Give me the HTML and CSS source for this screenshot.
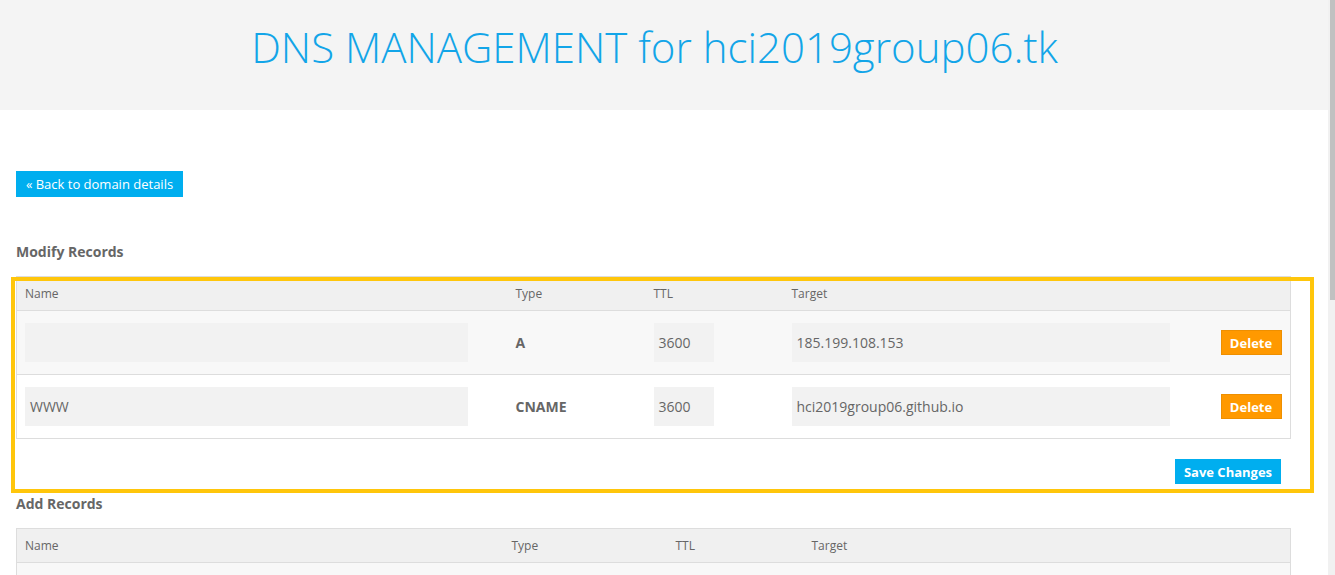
FILE: index.html
```html
<!DOCTYPE html>
<html lang="en">
<head>
<meta charset="utf-8">
<title>DNS Management</title>
<link rel="stylesheet" href="styles.css">
</head>
<body>
<header class="page-header">
  <h1 class="page-title">DNS MANAGEMENT for hci2019group06.tk</h1>
</header>
<main class="content">
  <a class="btn btn-blue btn-back" href="#">« Back to domain details</a>

  <h3 class="section-title">Modify Records</h3>
  <div class="highlight-zone">
    <table class="records">
      <colgroup>
        <col class="c-name"><col class="c-type"><col class="c-ttl"><col class="c-target"><col class="c-action">
      </colgroup>
      <thead>
        <tr><th>Name</th><th>Type</th><th>TTL</th><th>Target</th><th></th></tr>
      </thead>
      <tbody>
        <tr class="alt">
          <td><div class="field field-name"></div></td>
          <td class="type">A</td>
          <td><div class="field field-ttl">3600</div></td>
          <td><div class="field field-target">185.199.108.153</div></td>
          <td><a class="btn btn-orange" href="#">Delete</a></td>
        </tr>
        <tr>
          <td><div class="field field-name">WWW</div></td>
          <td class="type">CNAME</td>
          <td><div class="field field-ttl">3600</div></td>
          <td><div class="field field-target">hci2019group06.github.io</div></td>
          <td><a class="btn btn-orange" href="#">Delete</a></td>
        </tr>
      </tbody>
    </table>
    <div class="actions">
      <a class="btn btn-blue btn-save" href="#">Save Changes</a>
    </div>
    <div class="highlight"></div>
  </div>

  <h3 class="section-title section-add">Add Records</h3>
  <table class="records records-add">
    <colgroup>
      <col class="a-name"><col class="a-type"><col class="a-ttl"><col class="a-target"><col class="a-action">
    </colgroup>
    <thead>
      <tr><th>Name</th><th>Type</th><th>TTL</th><th>Target</th><th></th></tr>
    </thead>
    <tbody>
      <tr class="alt">
        <td><div class="field field-name"></div></td>
        <td></td>
        <td><div class="field field-ttl"></div></td>
        <td><div class="field field-target"></div></td>
        <td></td>
      </tr>
    </tbody>
  </table>
</main>
<div class="scrollbar"><div class="scrollbar-thumb"></div></div>
</body>
</html>
```

FILE: styles.css
```css
html, body {
  margin: 0;
  padding: 0;
  overflow: hidden;
  height: 100%;
}
body {
  font-family: "Open Sans", "Liberation Sans", sans-serif;
  color: #666;
  background: #fff;
  width: 1328px;
}
.page-header {
  background: #f4f4f4;
  height: 110px;
  box-sizing: border-box;
  padding: 18px 19px 0 0;
  text-align: center;
}
.page-title {
  margin: 0;
  font-size: 42px;
  font-weight: 300;
  line-height: 58px;
  color: #12a5e8;
}
.content {
  padding: 61px 0 0 16px;
  width: 1274px;
}
.btn {
  display: inline-flex;
  align-items: center;
  justify-content: center;
  height: 25px;
  box-sizing: border-box;
  text-decoration: none;
  color: #fff;
  font-size: 13px;
}
.btn-blue {
  background: #00aeef;
}
.btn-back {
  height: 26px;
  width: 167px;
  font-weight: 400;
}
.btn-orange {
  background: #ff9900;
  border: 1px solid #ee8f00;
  width: 61px;
  font-weight: 700;
}
.btn-save {
  width: 106px;
  font-weight: 700;
}
.section-title {
  margin: 45px 0 14px;
  font-size: 14px;
  line-height: 20px;
  font-weight: 700;
  color: #666;
}
.section-add {
  margin-top: 10px;
  margin-bottom: 14px;
}
.highlight-zone {
  position: relative;
}
.highlight {
  position: absolute;
  left: -5px;
  top: 1px;
  right: -24px;
  bottom: -9px;
  border: 4px solid #ffc60b;
  pointer-events: none;
}
.records {
  width: 1274px;
  table-layout: fixed;
  border-collapse: collapse;
  border: 1px solid #ddd;
  font-size: 12px;
}
.c-name { width: 491px; }
.c-type { width: 138px; }
.c-ttl { width: 138px; }
.c-target { width: 429px; }
.c-action { width: 78px; }
.a-name { width: 487px; }
.a-type { width: 164px; }
.a-ttl { width: 136px; }
.a-target { width: 409px; }
.a-action { width: 78px; }
.records th {
  background: #f0f0f0;
  height: 33px;
  padding: 0 8px;
  text-align: left;
  font-weight: 400;
  color: #666;
  border-bottom: 1px solid #ddd;
}
.records td {
  padding: 12px 8px;
  border-bottom: 1px solid #ddd;
  vertical-align: middle;
  font-size: 14px;
}
.records tr.alt td {
  background: #f8f8f8;
}
.records td.type {
  font-weight: 700;
}
.field {
  background: #f2f2f2;
  height: 39px;
  box-sizing: border-box;
  padding-left: 5px;
  display: flex;
  align-items: center;
  font-size: 14px;
  color: #666;
}
.field-name { width: 443px; }
.field-ttl { width: 60px; }
.field-target { width: 378px; }
.actions {
  display: flex;
  justify-content: flex-end;
  padding: 20px 9px 0 0;
}
.scrollbar {
  position: fixed;
  top: 0;
  right: 0;
  width: 7px;
  height: 100%;
  background: #f1f1f1;
}
.scrollbar-thumb {
  margin-left: 2px;
  height: 300px;
  background: #c1c1c1;
}
```
